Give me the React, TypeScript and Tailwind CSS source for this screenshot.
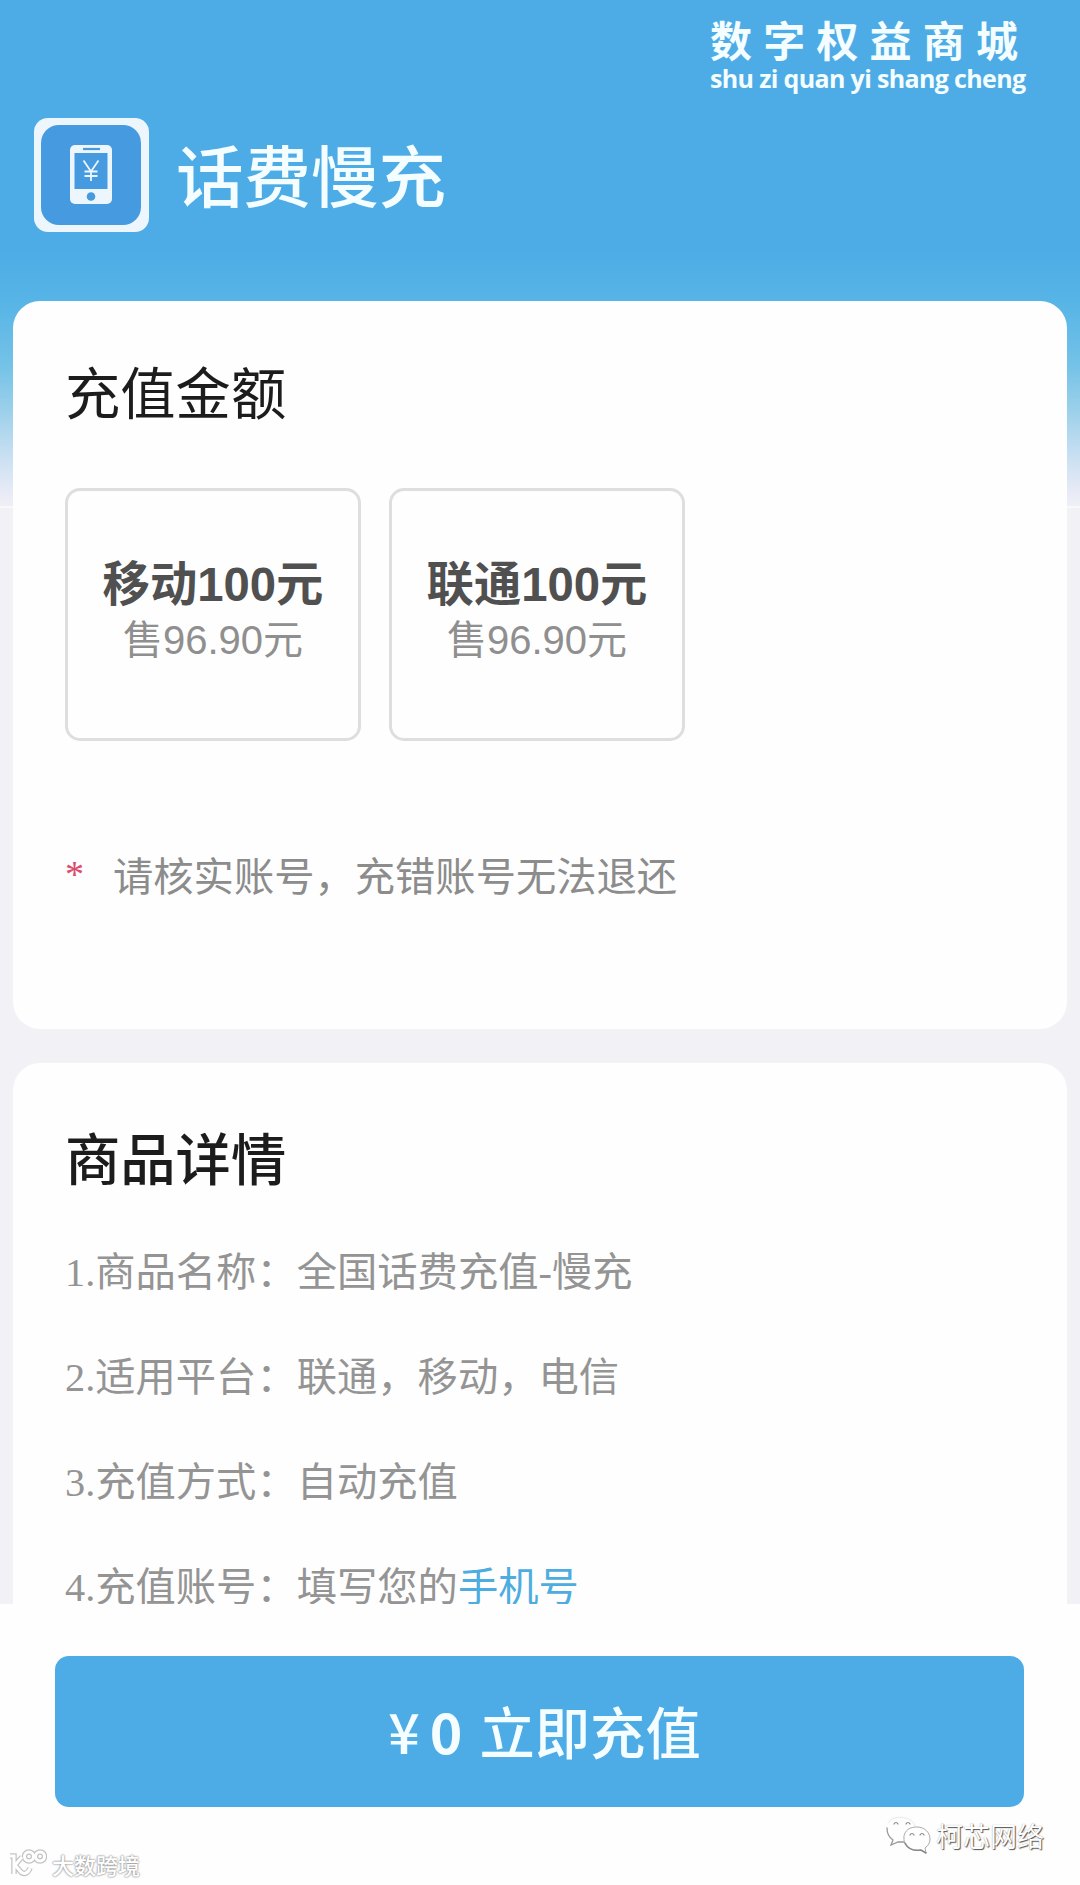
const amounts = [
  { name: "移动100元", price: "售96.90元" },
  { name: "联通100元", price: "售96.90元" },
];

const details = [
  { label: "1.商品名称：", value: "全国话费充值-慢充" },
  { label: "2.适用平台：", value: "联通，移动，电信" },
  { label: "3.充值方式：", value: "自动充值" },
  { label: "4.充值账号：", value: "填写您的", link: "手机号" },
];

export default function App() {
  return (
    <div className="relative flex h-[1885px] w-[1080px] flex-col overflow-hidden bg-[#f1f1f6] font-['Noto_Sans_CJK_SC',sans-serif]">
      {/* HEADER BACKDROP */}
      <div className="absolute inset-x-0 top-0 h-[508px] border-b-2 border-[#f9f9fb] bg-[linear-gradient(180deg,#4dace6_0px,#4dace6_250px,#56b4e6_300px,#74c2e8_365px,#9bd0ea_410px,#c8dff2_455px,#e6eaf5_490px,#eff0f6_506px)]" />

      <header className="relative flex h-[301px] shrink-0 flex-col text-[#f4fdff]">
        <div className="flex flex-col pl-[710px] pt-[16px]">
          <p className="h-[46px] whitespace-nowrap text-[42px] font-bold leading-[46px] tracking-[11.2px]">数字权益商城</p>
          <p className="whitespace-nowrap font-['Open_Sans',sans-serif] text-[25px] font-bold leading-[32px] tracking-[-0.65px]">
            shu zi quan yi shang cheng
          </p>
        </div>
        <div className="mt-[24px] flex h-[114px] items-center pl-[34px]">
          <RechargeIcon />
          <h1 className="mb-[6px] ml-[27px] text-[67.5px] font-medium leading-[105px]">话费慢充</h1>
        </div>
      </header>

      <main className="relative flex h-[1303px] shrink-0 flex-col gap-[34px] overflow-hidden px-[13px]">
        {/* AMOUNT */}
        <section className="h-[728px] shrink-0 rounded-[27px] bg-[#fefefe] px-[52px] pt-[59px]">
          <h2 className="text-[55.3px] leading-[60px] text-[#1c1c1c]">充值金额</h2>
          <div className="mt-[68px] flex gap-[28px]">
            {amounts.map((item) => (
              <AmountCard key={item.name} {...item} />
            ))}
          </div>
          <div className="mt-[108px] flex h-[50px] items-center text-[40.3px] leading-[50px] text-[#8c8c8c]">
            <span className="w-[48px] font-['Liberation_Serif',serif] text-[38px] text-[#dc4a6e]">*</span>
            <p className="whitespace-nowrap">请核实账号，充错账号无法退还</p>
          </div>
        </section>

        {/* DETAILS */}
        <section className="h-[700px] shrink-0 rounded-[27px] bg-[#fefefe] px-[52px] pt-[63px]">
          <h2 className="text-[55.3px] font-medium leading-[60px] text-[#1c1c1c]">商品详情</h2>
          <ul className="mt-[34px] font-['Liberation_Serif','Noto_Sans_CJK_SC',serif] text-[40.3px] leading-[105px] text-[#949494]">
            {details.map((item) => (
              <li key={item.label} className="h-[105px] whitespace-nowrap">
                {item.label}
                {item.value}
                {item.link && <span className="text-[#4dace0]">{item.link}</span>}
              </li>
            ))}
          </ul>
        </section>
      </main>

      {/* PAY BAR */}
      <footer className="relative h-[281px] shrink-0 bg-[#fefefe] px-[55px] pt-[52px]">
        <button
          type="button"
          className="flex h-[151px] w-[969px] items-center justify-center rounded-[14px] bg-[#4dace6] pb-[4px] pl-[10px] text-[55.3px] font-medium leading-[60px] text-[#f4fdff]"
        >
          <span className="mr-[10px]">¥</span>
          <span className="mr-[17px] font-bold">0</span>
          立即充值
        </button>

        <div className="absolute left-[886px] top-[212px] flex items-center gap-[5px]">
          <WechatMark />
          <span className="whitespace-nowrap text-[27px] leading-[40px] text-white [text-shadow:1px_1px_1px_#555,0_0_1px_#999]">柯芯网络</span>
        </div>
        <div className="absolute left-[8px] top-[243px] flex items-center gap-[5px]">
          <BrandMark />
          <span className="whitespace-nowrap text-[22px] font-medium leading-[34px] text-white [text-shadow:0_0_2px_#888,0_0_2px_#999]">大数跨境</span>
        </div>
      </footer>
    </div>
  );
}

const AmountCard = ({ name, price }: { name: string; price: string }) => (
  <div className="flex h-[253px] w-[296px] flex-col items-center rounded-[15px] border-[3px] border-[#dedede] pt-[66px] font-['Liberation_Sans','Noto_Sans_CJK_SC',sans-serif]">
    <p className="h-[58px] whitespace-nowrap text-[47.3px] font-bold leading-[56px] text-[#505050]">{name}</p>
    <p className="h-[50px] whitespace-nowrap text-[40px] leading-[50px] text-[#8f8f8f]">{price}</p>
  </div>
);

const RechargeIcon = () => (
  <svg width="115" height="114" viewBox="0 0 115 114" fill="none">
    <rect width="115" height="114" rx="14" fill="#eef6fd" />
    <rect x="7" y="7" width="100" height="100" rx="18" fill="#469be0" />
    <rect x="36" y="27" width="42" height="59" rx="5" fill="#eef6fd" />
    <rect x="40.500" y="35" width="33" height="36" fill="#469be0" />
    <path d="M49 31h17" stroke="#469be0" strokeWidth="2.200" />
    <circle cx="57" cy="78.500" r="4.300" fill="#469be0" />
    <path d="M49.500 42.500l7.500 11 7.500-11M57 53.500V63M50.500 53.500h13M50.500 58h13" stroke="#eef6fd" strokeWidth="1.800" />
  </svg>
);

const WechatMark = () => (
  <svg width="45" height="40" viewBox="0 0 45 40" fill="none" strokeLinecap="round">
    <path d="M2 7C5 2 12 0 19 2c5 1 9 4 10 8" stroke="#e8e8e8" />
    <path d="M1 12c0 6 3 10 6 12l-2 5 7-3h6" stroke="#999" strokeWidth="1.300" />
    <path d="M18 20c1-6 6-9 13-9 8 0 13 6 13 12 0 4-2 7-5 9l1 5-5-3c-9 2-17-3-17-10z" fill="#fefefe" stroke="#aaa" />
    <path d="M19 27c3 6 9 8 16 7l5 3" stroke="#888" strokeWidth="1.500" />
    <path d="M8 8c1-2 3-2 4 0M20 8c1-2 3-2 4 0M24 19c1-2 3-2 4 0M34 19c1-2 3-2 4 0" stroke="#888" strokeWidth="1.200" />
  </svg>
);

const BrandMark = () => (
  <svg width="39" height="30" viewBox="0 0 39 30" fill="none">
    <g stroke="#c4c4c4" strokeWidth="5.500">
      <path d="M2 7h4v18M14 8l-7 8 5 6c3 4 8 3 10-3" />
      <circle cx="21" cy="7.500" r="4.500" />
      <circle cx="32" cy="7.500" r="4.500" />
    </g>
    <g stroke="#fff" strokeWidth="3">
      <path d="M2 7h4v18M14 8l-7 8 5 6c3 4 8 3 10-3" />
      <circle cx="21" cy="7.500" r="4.500" />
      <circle cx="32" cy="7.500" r="4.500" />
    </g>
  </svg>
);
